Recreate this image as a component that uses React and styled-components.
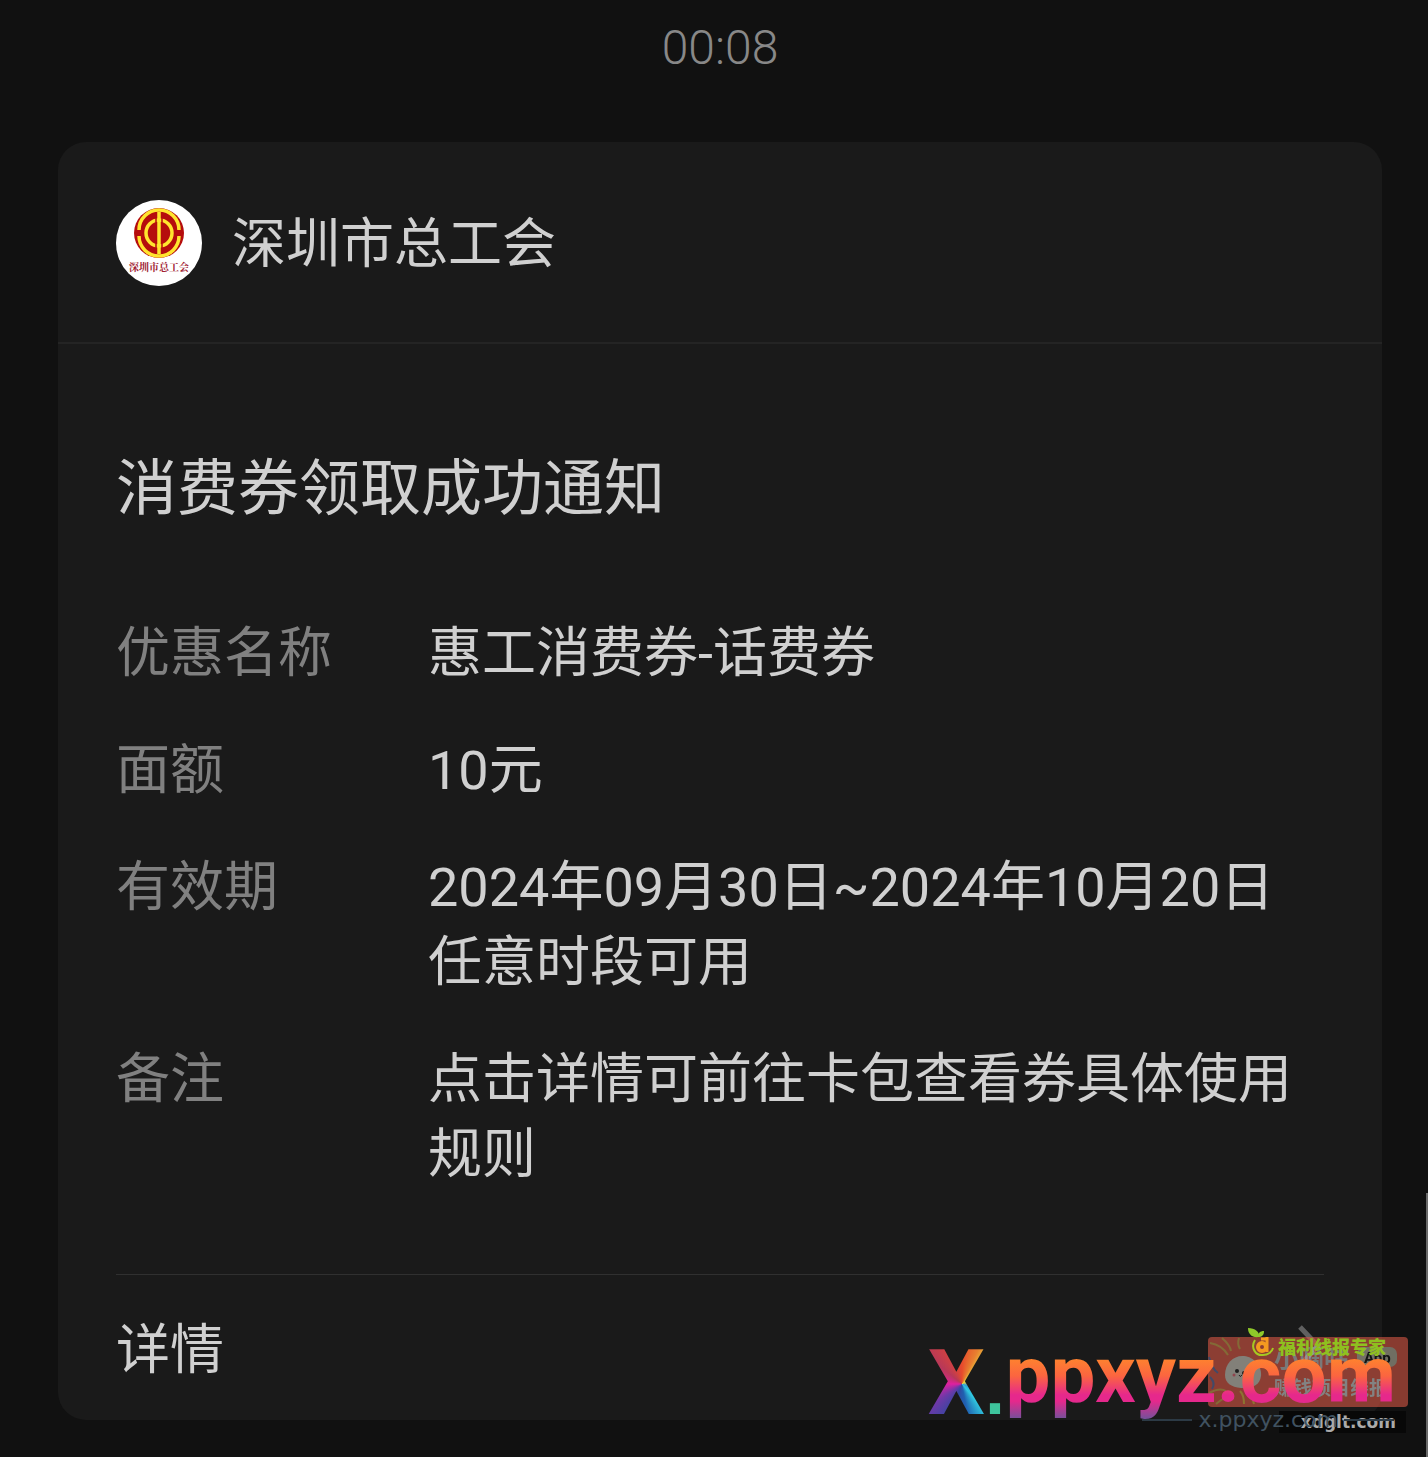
import React from 'react';
import styled, { createGlobalStyle } from 'styled-components';

const GlobalStyle = createGlobalStyle`
  * {
    box-sizing: border-box;
  }

  body {
    margin: 0;
    background-color: #111111;
    color: #d0d0d0;
    font-family: Roboto, 'Noto Sans CJK SC', sans-serif;
  }
`;

const Page = styled.main`
  position: relative;
  min-height: 100vh;
  padding: 20px 46px 37px 58px;
`;

const Time = styled.time`
  display: block;
  height: 56px;
  margin-bottom: 66px;
  color: #888888;
  font-size: 48px;
  font-weight: 300;
  line-height: 56px;
  text-align: center;
`;

const Card = styled.article`
  border-radius: 28px;
  background-color: #1a1a1a;
`;

const CardHeader = styled.header`
  display: flex;
  align-items: center;
  gap: 30px;
  height: 202px;
  padding: 2px 58px 0;
  border-bottom: 2px solid #242424;
`;

const Avatar = styled.svg`
  width: 86px;
  height: 86px;
`;

const AccountName = styled.span`
  padding-top: 4px;
  font-size: 54px;
  line-height: 74px;
`;

const CardBody = styled.div`
  padding: 100px 58px 0;
`;

const Title = styled.h1`
  margin: 0 0 82px;
  font-size: 61px;
  font-weight: 400;
  line-height: 90px;
`;

const Details = styled.dl`
  display: grid;
  grid-template-columns: 254px 1fr;
  gap: 42px 58px;
  margin: 0;
  padding-bottom: 82px;
  font-size: 54px;
  line-height: 75px;
`;

const Label = styled.dt`
  color: #808080;
`;

const Value = styled.dd`
  margin: 0;
`;

const DetailsLink = styled.a`
  display: flex;
  align-items: center;
  justify-content: space-between;
  height: 146px;
  padding-bottom: 4px;
  border-top: 1px solid #303030;
  color: inherit;
  font-size: 54px;
  text-decoration: none;
`;

const Chevron = styled.svg`
  width: 28px;
  height: 46px;
`;

const ScrollThumb = styled.div`
  position: absolute;
  right: 0;
  bottom: 0;
  width: 2px;
  height: 264px;
  background-color: #6a6a6a;
`;

const Watermark = styled.aside`
  position: absolute;
  right: 20px;
  bottom: 20px;
  width: 484px;
  height: 112px;
`;

const Layer = styled.div`
  position: absolute;
  right: ${(props) => props.$right}px;
  top: ${(props) => props.$top}px;
  display: flex;
  align-items: center;
  white-space: nowrap;
`;

const BrandMark = styled(Layer)`
  align-items: baseline;
`;

const StickerArt = styled.svg`
  display: block;
  width: 200px;
  height: 70px;
  opacity: 0.6;
`;

const LeafArt = styled.svg`
  display: block;
  width: 28px;
  height: 30px;
`;

const Brand = styled.span`
  color: transparent;
  background-clip: text;
  background-image: linear-gradient(#ff8a2a 26px, #fb6540 48px, #e6288c 67px, #e6288c 73px, #7a4f9a 90px);
  font-size: 80px;
  font-weight: 700;
  line-height: 94px;
`;

const BrandInitial = styled.span`
  color: transparent;
  background-clip: text;
  background-image: conic-gradient(
    from 0deg at 34px 52px,
    #e84a2c,
    #e88030 25deg,
    #e8d040 42deg,
    #e8d040 60deg,
    #30a0d8 110deg,
    #30c8e0 140deg,
    #2060b0 170deg,
    #3048a0 200deg,
    #7038a8 235deg,
    #e020a0 270deg,
    #b83858 310deg,
    #e84a2c
  );
  font-size: 90px;
  font-weight: 700;
  line-height: 104px;
`;

const BrandDot = styled.span`
  color: #3ec49c;
  font-family: 'Liberation Sans', sans-serif;
  font-size: 72px;
  font-weight: 700;
  line-height: 80px;
`;

const GreenText = styled.span`
  color: #8fc01f;
  font-family: 'Noto Sans CJK SC', sans-serif;
  font-size: 18px;
  font-weight: 900;
  line-height: 24px;
`;

const Site = styled.span`
  padding: 0 10px 0 22px;
  background-color: #080808;
  color: #aaaaaa;
  font-family: 'DejaVu Sans', sans-serif;
  font-size: 17px;
  font-weight: 700;
  line-height: 22px;
`;

const Address = styled.span`
  display: flex;
  align-items: center;
  gap: 6px;
  color: #405260;
  font-family: 'DejaVu Sans', sans-serif;
  font-size: 22px;
  line-height: 24px;

  &::before,
  &::after {
    content: '';
    width: 50px;
    height: 2px;
    background-color: #2c3a45;
  }
`;

const rows = [
  { label: '优惠名称', value: '惠工消费券-话费券' },
  { label: '面额', value: '10元' },
  { label: '有效期', value: '2024年09月30日~2024年10月20日任意时段可用' },
  { label: '备注', value: '点击详情可前往卡包查看券具体使用规则' },
];

const UnionLogo = () => (
  <Avatar viewBox="0 0 86 86" aria-hidden="true">
    <circle cx="43" cy="43" r="43" fill="#fff" />
    <circle cx="43" cy="33" r="25" fill="#b50d0d" />
    <g fill="none" stroke="#ffe52e" strokeWidth="3.500">
      <path d="M23 30 A20 20 0 0 1 63 30 M23 36 A20 20 0 0 0 63 36" />
      <circle cx="43" cy="33" r="13" />
      <path d="M43 12 V54" />
    </g>
    <path d="M40 17 V49 M46 17 V49" fill="none" stroke="#b50d0d" strokeWidth="1.500" />
    <text x="43" y="71" fill="#a02030" fontFamily="'Noto Serif CJK SC', 'Noto Sans CJK SC', serif" fontSize="10" fontWeight="700" textAnchor="middle">
      深圳市总工会
    </text>
  </Avatar>
);

const Sticker = () => (
  <StickerArt viewBox="0 0 200 70" aria-hidden="true">
    <rect width="200" height="70" rx="4" fill="#d85745" />
    <g fill="none" strokeWidth="2">
      <path d="M2 6 Q14 8 20 18 M14 1 Q22 8 23 14 M31 1 Q29 7 32 12 M1 56 Q12 50 18 54 M8 67 Q18 58 24 60" stroke="#c9a04a" />
      <path d="M36 67 Q36 58 32 54 M46 67 Q44 58 38 54" stroke="#d8b040" />
      <path d="M1 20 Q4 32 10 36 M2 40 Q8 46 4 52" stroke="#5b6a9c" />
    </g>
    <path d="M17 38 C17 26 26 18 36 19 C46 20 54 29 53 39 C52 48 44 52 33 51 C23 50 17 46 17 38Z" fill="#c8c4b8" />
    <circle cx="29" cy="34" r="2" fill="#222" />
    <circle cx="36" cy="36" r="2" fill="#222" />
    <circle cx="26" cy="38" r="1.500" fill="#dd6070" />
    <path d="M31 38 Q32 41 34 38" fill="none" stroke="#222" />
    <text x="66" y="30" fill="#b8b8b8" fontSize="25" fontWeight="700">小嘀咕</text>
    <rect x="149" y="10" width="40" height="20" rx="7" fill="#b0ac98" />
    <text x="156" y="26" fill="#111" fontSize="15" fontWeight="700">App</text>
    <text x="66" y="58" fill="#c8c8c8" fontSize="19" fontWeight="700">赚钱项目线报</text>
  </StickerArt>
);

const LeafLogo = () => (
  <LeafArt viewBox="0 0 28 30" aria-hidden="true">
    <path d="M1 0 C8 0 13 4 12 9 C5 10 1 6 1 0Z" fill="#8fc92a" />
    <path d="M11 9 C11 5 13 3 17 3 C17 7 15 9 11 9Z" fill="#8fc92a" />
    <path d="M8 12 C3 20 9 28 16 27 C21 27 25 24 26 20" fill="none" stroke="#a5c922" strokeWidth="2" />
    <circle cx="15" cy="19" r="4" fill="none" stroke="#f59a20" strokeWidth="4" />
    <path d="M20 9 V24 M14 11 H21" fill="none" stroke="#f59a20" strokeWidth="3" />
  </LeafArt>
);

const App = () => {
  return (
    <>
      <GlobalStyle />
      <Page>
        <Time>00:08</Time>
        <Card>
          <CardHeader>
            <UnionLogo />
            <AccountName>深圳市总工会</AccountName>
          </CardHeader>
          <CardBody>
            <Title>消费券领取成功通知</Title>
            <Details>
              {rows.map((row) => (
                <React.Fragment key={row.label}>
                  <Label>{row.label}</Label>
                  <Value>{row.value}</Value>
                </React.Fragment>
              ))}
            </Details>
            <DetailsLink href="#details">
              详情
              <Chevron viewBox="0 0 28 46" fill="none" stroke="#606060" strokeWidth="5" aria-hidden="true">
                <path d="M4 4 L22 23 L4 42" />
              </Chevron>
            </DetailsLink>
          </CardBody>
        </Card>
        <ScrollThumb />
        <Watermark>
          <Layer $right={0} $top={12}>
            <Sticker />
          </Layer>
          <Layer $right={22} $top={9}>
            <GreenText>福利线报专家</GreenText>
          </Layer>
          <Layer $right={133} $top={3}>
            <LeafLogo />
          </Layer>
          <Layer $right={2} $top={86}>
            <Site>xdglt.com</Site>
          </Layer>
          <Layer $right={14} $top={83}>
            <Address>x.ppxyz.com</Address>
          </Layer>
          <BrandMark $right={403} $top={7}>
            <BrandInitial>X</BrandInitial>
            <BrandDot>.</BrandDot>
          </BrandMark>
          <Layer $right={12} $top={3}>
            <Brand>ppxyz.com</Brand>
          </Layer>
        </Watermark>
      </Page>
    </>
  );
};

export default App;
